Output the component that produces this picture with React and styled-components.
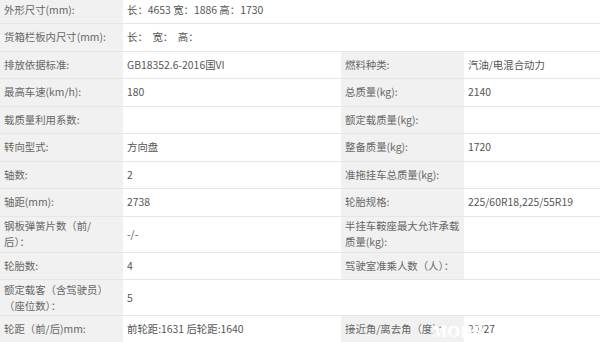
import React from "react";
import styled, { createGlobalStyle } from "styled-components";

const Global = createGlobalStyle`
  html, body { margin: 0; padding: 0; background: #fff; overflow: hidden; }
  body { font-family: "Noto Sans CJK SC", "Noto Sans", sans-serif; }
`;

const Table = styled.div`
  width: 600px;
  margin-top: -3.5px;
  position: relative;
  font-size: 10.4px;
  color: #5a5a5a;
`;

const Row = styled.div`
  display: grid;
  grid-template-columns: 123px 218px 123px 136px;
  border-bottom: 1px solid #e6e6e6;
`;

const Cell = styled.div`
  display: flex;
  align-items: center;
  min-height: 26.5px;
  padding: 1.5px 4px;
  box-sizing: border-box;
  line-height: 16px;
  background: ${(p) => (p.$label ? "#f1f1f1" : "#fff")};
  color: ${(p) => (p.$label ? "#666" : "#555")};
  grid-column: span ${(p) => p.$span || 1};
  white-space: pre;
  overflow: visible;
`;

const Watermark = styled.div`
  position: absolute;
  left: 432px;
  bottom: 3px;
  font-family: "Liberation Serif", serif;
  font-weight: bold;
  font-size: 16px;
  letter-spacing: 0.5px;
  color: rgba(255, 255, 255, 0.95);
  text-shadow: 0 0 2px rgba(255, 255, 255, 0.9);
`;

const rows = [
  [["外形尺寸(mm):", "长：4653 宽：1886 高：1730"]],
  [["货箱栏板内尺寸(mm):", "长：  宽：  高："]],
  [["排放依据标准:", "GB18352.6-2016国VI"], ["燃料种类:", "汽油/电混合动力"]],
  [["最高车速(km/h):", "180"], ["总质量(kg):", "2140"]],
  [["载质量利用系数:", ""], ["额定载质量(kg):", ""]],
  [["转向型式:", "方向盘"], ["整备质量(kg):", "1720"]],
  [["轴数:", "2"], ["准拖挂车总质量(kg):", ""]],
  [["轴距(mm):", "2738"], ["轮胎规格:", "225/60R18,225/55R19"]],
  [["钢板弹簧片数（前/\n后）：", "-/-"], ["半挂车鞍座最大允许承载\n质量(kg):", ""]],
  [["轮胎数:", "4"], ["驾驶室准乘人数（人）：", ""]],
  [["额定载客（含驾驶员）\n（座位数）：", "5"]],
  [["轮距（前/后)mm:", "前轮距:1631 后轮距:1640"], ["接近角/离去角（度）：", "20/27"]],
];

export default function App() {
  return (
    <>
      <Global />
      <Table>
        {rows.map((pairs, i) => (
          <Row key={i}>
            {pairs.map(([label, value], j) => (
              <React.Fragment key={j}>
                <Cell $label>{label}</Cell>
                <Cell $span={pairs.length === 1 ? 3 : 1}>{value}</Cell>
              </React.Fragment>
            ))}
          </Row>
        ))}
        <Watermark>MODB</Watermark>
      </Table>
    </>
  );
}
